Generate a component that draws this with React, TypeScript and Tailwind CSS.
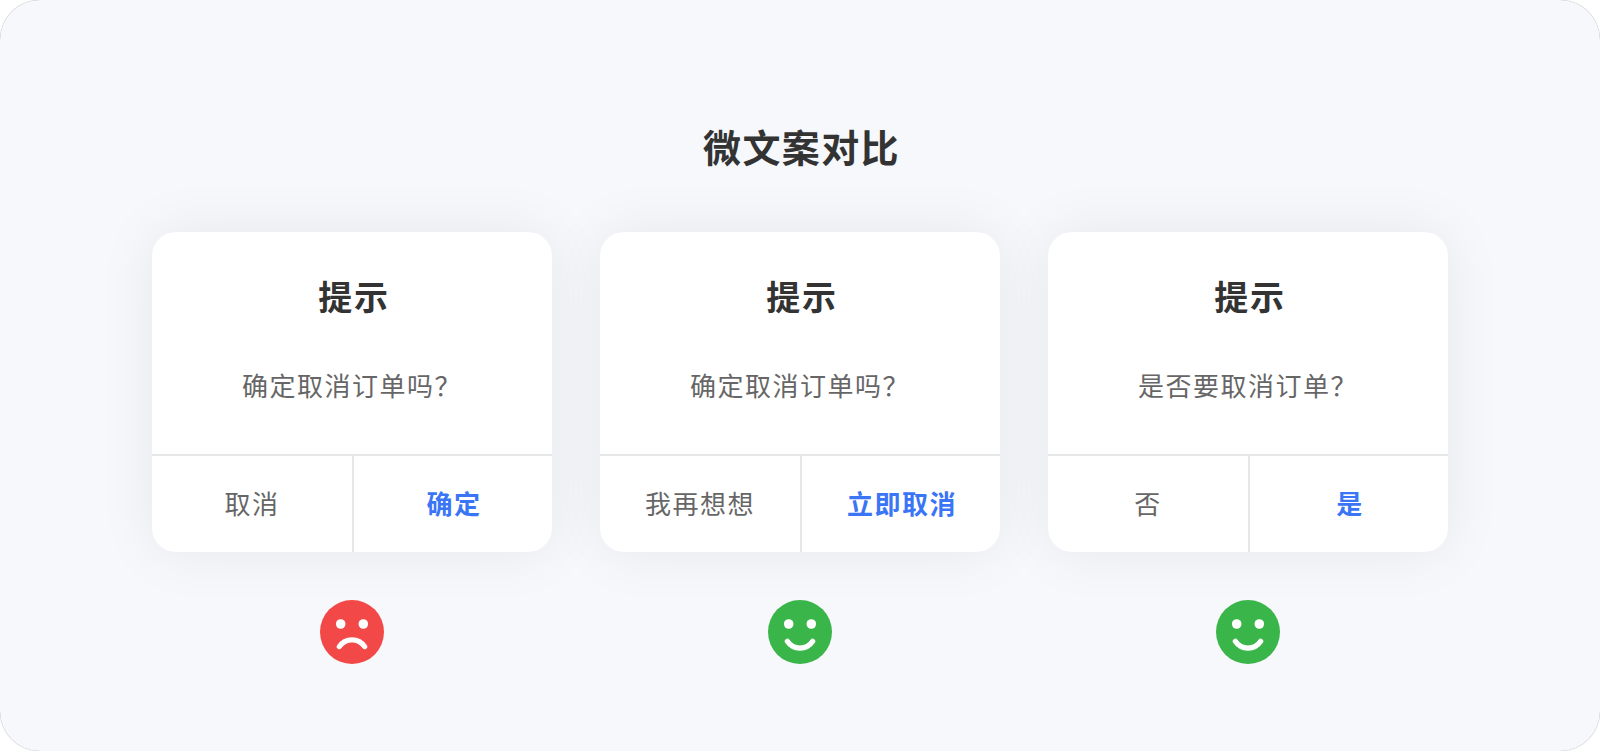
type Mood = "sad" | "happy";

type DialogExample = {
  id: string;
  title: string;
  message: string;
  cancelText: string;
  confirmText: string;
  mood: Mood;
};

const EXAMPLES: DialogExample[] = [
  {
    id: "1",
    title: "提示",
    message: "确定取消订单吗？",
    cancelText: "取消",
    confirmText: "确定",
    mood: "sad",
  },
  {
    id: "2",
    title: "提示",
    message: "确定取消订单吗？",
    cancelText: "我再想想",
    confirmText: "立即取消",
    mood: "happy",
  },
  {
    id: "3",
    title: "提示",
    message: "是否要取消订单？",
    cancelText: "否",
    confirmText: "是",
    mood: "happy",
  },
];

function Face({ mood }: { mood: Mood }) {
  const happy = mood === "happy";

  return (
    <svg width="64" height="64" viewBox="0 0 64 64" fill="none" className="block">
      <circle cx="32" cy="32" r="32" fill={happy ? "#3AB54A" : "#F34848"} />
      <circle cx="20.7" cy="24" r="4.8" fill="#fff" />
      <circle cx="43.3" cy="24" r="4.8" fill="#fff" />
      <path
        d={happy ? "M19.3 41.3C25.3 50.3 38.7 50.3 44.7 41.3" : "M19.3 46.6C25.3 37.5 38.7 37.5 44.7 46.6"}
        stroke="#fff"
        strokeWidth="5.2"
        strokeLinecap="round"
      />
    </svg>
  );
}

function Dialog({ example }: { example: DialogExample }) {
  return (
    <div className="flex h-80 w-[400px] flex-col overflow-hidden rounded-3xl bg-white shadow-[0_0_60px_rgba(0,0,0,0.07)]">
      <div className="flex flex-1 flex-col items-center pt-[39px]">
        <h2 className="pl-1 text-[34px] leading-[50px] font-bold tracking-[1.8px] text-[#333]">
          {example.title}
        </h2>
        <p className="mt-[44px] text-[26px] leading-10 tracking-[1.5px] text-[#666]">
          {example.message}
        </p>
      </div>
      <div className="flex h-[98px] flex-none border-t-2 border-[#e6e7e9] text-[26px] tracking-[1.5px]">
        <button type="button" className="w-[200px] pb-1 text-[#666]">
          {example.cancelText}
        </button>
        <button
          type="button"
          className="w-[200px] border-l-2 border-[#e6e7e9] pb-1 pl-0.5 font-bold text-[#3a75f6]"
        >
          {example.confirmText}
        </button>
      </div>
    </div>
  );
}

export default function App() {
  return (
    <div className="h-[751px] w-[1600px] overflow-hidden bg-white font-['Noto_Sans_CJK_SC',sans-serif]">
      <div className="flex h-full flex-col items-center rounded-[40px] bg-[#f6f8fc] pt-[118px] shadow-[0_0_1px_rgba(0,0,0,0.45)]">
        <h1 className="pl-[3px] text-[38px] leading-[56px] font-bold tracking-[1.4px] text-[#333]">
          微文案对比
        </h1>
        <div className="mt-[58px] flex gap-12">
          {EXAMPLES.map((example) => (
            <div key={example.id} className="flex flex-col items-center gap-12">
              <Dialog example={example} />
              <Face mood={example.mood} />
            </div>
          ))}
        </div>
      </div>
    </div>
  );
}
